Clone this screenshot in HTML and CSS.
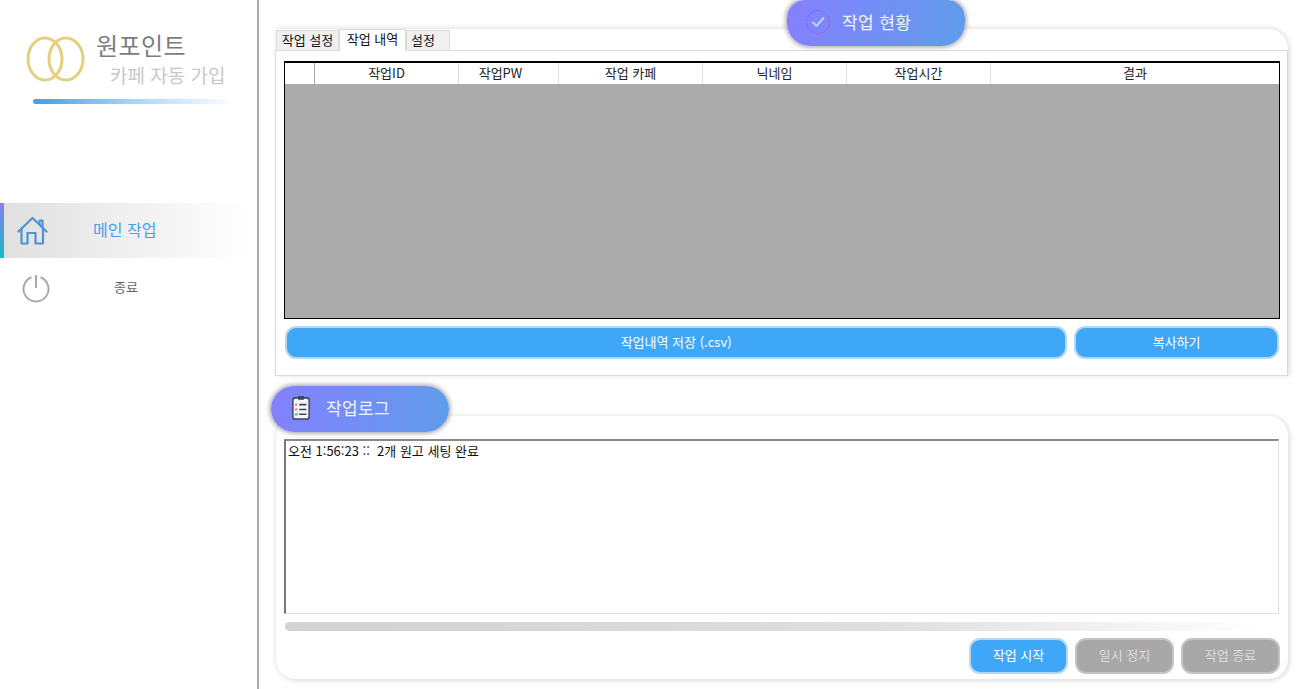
FILE: index.html
```html
<!DOCTYPE html>
<html lang="ko">
<head>
<meta charset="utf-8">
<title>원포인트 카페 자동 가입</title>
<link rel="stylesheet" href="styles.css">
</head>
<body>
<div class="app">
  <aside class="sidebar">
    <div class="brand">
      <svg class="rings" width="60" height="46" viewBox="0 0 60 46" fill="none" stroke="#e3cf7c" stroke-width="3">
        <ellipse cx="19" cy="23" rx="17" ry="21"/>
        <ellipse cx="40" cy="23" rx="17" ry="21"/>
      </svg>
      <div class="brand-text">
        <div class="brand-name">원포인트</div>
        <div class="brand-sub">카페 자동 가입</div>
      </div>
    </div>
    <div class="brand-line"></div>
    <nav class="menu">
      <div class="menu-item active">
        <svg class="menu-icon" width="31" height="30" viewBox="0 0 31 30" fill="none" stroke="#4d94d0" stroke-width="2.2" stroke-linejoin="round" stroke-linecap="round">
          <path d="M1.5 15.5 15.5 2 29.5 15.5"/>
          <path d="M22.5 8.5V4.5h3v7.5"/>
          <path d="M4.5 13v14.5h6V17h8v10.5h7.5V13"/>
        </svg>
        <span class="menu-label">메인 작업</span>
      </div>
      <div class="menu-item exit">
        <svg class="menu-icon power" width="28" height="28" viewBox="0 0 28 28" fill="none" stroke="#a8a8a8" stroke-width="2">
          <path d="M9.5 2.3a12.5 12.5 0 1 0 9 0"/>
          <path d="M14 0V13"/>
        </svg>
        <span class="menu-label">종료</span>
      </div>
    </nav>
  </aside>
  <main class="main">
    <section class="status-panel">
      <div class="pill pill-status">
        <svg width="26" height="26" viewBox="0 0 26 26" fill="none">
          <defs>
            <linearGradient id="ring" x1="0" y1="0" x2="1" y2="1">
              <stop offset="0" stop-color="#5a78e8"/>
              <stop offset="1" stop-color="#c04fe0"/>
            </linearGradient>
          </defs>
          <circle cx="13" cy="13" r="11.5" stroke="url(#ring)" stroke-width="1" stroke-dasharray="14 1.5 2 1 2 1"/>
          <path d="M8 13.5l3.5 3.5 7-8" stroke="#c5cdf5" stroke-width="2" stroke-linecap="round" stroke-linejoin="round"/>
        </svg>
        <span>작업 현황</span>
      </div>
      <div class="tabs">
        <div class="tab">작업 설정</div>
        <div class="tab current">작업 내역</div>
        <div class="tab last">설정</div>
      </div>
      <div class="tab-body">
        <div class="grid">
          <div class="grid-head">
            <div class="cell c0"></div>
            <div class="cell c1">작업ID</div>
            <div class="cell c2">작업PW</div>
            <div class="cell c3">작업 카페</div>
            <div class="cell c3">닉네임</div>
            <div class="cell c3">작업시간</div>
            <div class="cell c4">결과</div>
          </div>
          <div class="grid-body"></div>
        </div>
        <div class="actions">
          <button class="btn wide">작업내역 저장 (.csv)</button>
          <button class="btn copy">복사하기</button>
        </div>
      </div>
    </section>
    <section class="log-panel">
      <div class="pill pill-log">
        <svg width="18" height="25" viewBox="0 0 20 26" fill="none" preserveAspectRatio="none">
          <rect x="1" y="3" width="18" height="22" rx="2.5" fill="#f4f5f8" stroke="#3c4560" stroke-width="1.6"/>
          <rect x="6.5" y="1" width="7" height="4" rx="1" fill="#3c4560"/>
          <path d="M8 10h8M8 15h8M8 20h8" stroke="#3c4560" stroke-width="1.6"/>
          <path d="M3.5 10h2" stroke="#e2574c" stroke-width="1.8"/>
          <path d="M3.5 15h2" stroke="#e2574c" stroke-width="1.8"/>
          <path d="M3.2 19.5l1.3 1.5 2-2.5" stroke="#35b58f" stroke-width="1.2"/>
        </svg>
        <span>작업로그</span>
      </div>
      <div class="log-box">오전 1:56:23 ::&nbsp; 2개 원고 세팅 완료</div>
      <div class="log-scroll"></div>
      <div class="log-actions">
        <button class="btn small">작업 시작</button>
        <button class="btn small off">일시 정지</button>
        <button class="btn small off">작업 종료</button>
      </div>
    </section>
  </main>
</div>
</body>
</html>
```
FILE: styles.css
```css
* { box-sizing: border-box; }
html, body { margin: 0; height: 100%; }
body {
  background: #fff;
  font-family: "Noto Sans CJK KR", "Noto Sans", sans-serif;
  overflow: hidden;
}
.app { display: flex; width: 1298px; height: 689px; }

.sidebar {
  width: 259px;
  flex: none;
  border-right: 2px solid #ababab;
  padding-top: 29px;
}
.brand { display: flex; padding-left: 26px; height: 70px; }
.rings { margin-top: 7px; flex: none; }
.brand-text { margin-left: 10px; }
.brand-name { font-size: 24px; line-height: 32px; color: #7d7d7d; letter-spacing: 0.4px; }
.brand-sub { font-size: 19px; line-height: 26px; margin: 1px 0 0 14px; color: #c8c8c8; white-space: nowrap; }
.brand-line {
  width: 202px;
  height: 5px;
  margin-left: 33px;
  border-radius: 3px;
  background: linear-gradient(90deg, #3f9fec, #a9d6f8 50%, #fff);
}
.menu { margin-top: 99px; }
.menu-item { display: flex; align-items: center; position: relative; }
.menu-item.active {
  height: 55px;
  border-left: 4px solid;
  border-image: linear-gradient(180deg, #8a7cf5, #12bcc0) 1;
  background: linear-gradient(90deg, #e0e0e0, #f0f0f0 50%, #fff 97%);
  padding-left: 13px;
}
.menu-item.active .menu-label { margin-left: 45px; padding-bottom: 3px; font-size: 16px; color: #44a3ea; }
.menu-item.exit { height: 56px; padding-left: 22px; }
.menu-item.exit .power { margin-top: 5px; }
.menu-item.exit .menu-label { margin-left: 64px; font-size: 13px; color: #666; }

.main { flex: 1; position: relative; padding: 29px 10px 0 17px; min-width: 0; }

.status-panel {
  position: relative;
  height: 347px;
  border-radius: 0 20px 0 0;
  box-shadow: 2px 0 5px #e4e4e4, 0 -2px 4px #f0f0f0;
  display: flex;
  flex-direction: column;
}
.pill {
  position: absolute;
  width: 178px;
  height: 46px;
  display: flex;
  align-items: center;
  color: #eef4ff;
  font-size: 17px;
  letter-spacing: 0.4px;
  background: linear-gradient(100deg, #8580ff, #5f9cea);
  box-shadow: 0 0 5px 1px #9a9a9a;
  z-index: 2;
}
.pill span { padding-bottom: 3px; }
.pill-status {
  top: -29px;
  left: 511px;
  border-radius: 18px 18px 23px 23px;
  padding-left: 18px;
  gap: 11px;
}
.pill-status svg { margin-top: -3px; }
.pill-log {
  top: -30px;
  left: -5px;
  border-radius: 23px;
  padding-left: 21px;
  gap: 16px;
}
.pill-log svg { margin-top: -4px; }
.tabs { display: flex; height: 21px; align-items: flex-end; font-size: 13px; color: #111; }
.tab {
  height: 20px;
  line-height: 17px;
  background: #f0f0f0;
  border: 1px solid #dcdcdc;
  border-bottom: none;
  width: 63px;
  text-align: center;
  white-space: nowrap;
}
.tab.current { background: #fff; height: 22px; width: 67px; position: relative; top: 1px; z-index: 1; }
.tab.last { width: 44px; text-align: left; padding-left: 4px; }
.tab-body {
  flex: 1;
  margin-left: -1px;
  border: 1px solid #dcdcdc;
  border-right-color: #d8d8d8;
  background: #fff;
  padding: 10px 8px 0 8px;
}
.grid { height: 258px; border: 2px solid #000; border-width: 2px 1.5px 1.5px 1.5px; display: flex; flex-direction: column; width: 996px; }
.grid-head { display: flex; height: 21px; flex: none; font-size: 13px; color: #222; }
.cell { border-right: 1px solid #e0e0e0; text-align: center; line-height: 19px; }
.c0 { width: 30px; border-right-color: #a8a8a8; }
.c1 { width: 144px; }
.c2 { width: 100px; padding-right: 16px; }
.c3 { width: 144px; }
.c4 { flex: 1; border-right: none; }
.grid-body { flex: 1; background: #ababab; }
.actions { display: flex; gap: 7px; margin-top: 7px; padding-left: 1px; }
.btn {
  height: 33px;
  border: 2px solid #b7d7f0;
  border-radius: 11px;
  background: #3fa7f8;
  color: #fff;
  font: 13px "Noto Sans CJK KR", "Noto Sans", sans-serif;
  padding: 0 0 2px;
}
.btn.wide { width: 783px; }
.btn.copy { width: 205px; }

.log-panel {
  position: relative;
  height: 263px;
  margin-top: 40px;
  border-radius: 20px;
  box-shadow: 1px 1px 5px 1px #dedede;
  padding: 23px 8px 0 8px;
  display: flex;
  flex-direction: column;
}
.log-box {
  height: 175px;
  width: 995px;
  flex: none;
  border: 1px solid #e0e0e0;
  border-top: 2px solid #8a8a8a;
  border-left: 2px solid #777;
  padding: 1px 2px;
  font-size: 13px;
  line-height: 17px;
  color: #111;
}
.log-scroll {
  height: 9px;
  width: 980px;
  margin: 8px 0 0 1px;
  flex: none;
  border-radius: 5px;
  background: linear-gradient(90deg, #d2d2d2, #dedede 60%, #fff);
}
.log-actions { display: flex; justify-content: flex-end; gap: 7px; margin-top: 7px; width: 996px; }
.btn.small { width: 99px; height: 36px; padding-bottom: 3px; }
.btn.off { background: #a8a8a8; border-color: #c4c4c4; color: #dcdcdc; }
```
